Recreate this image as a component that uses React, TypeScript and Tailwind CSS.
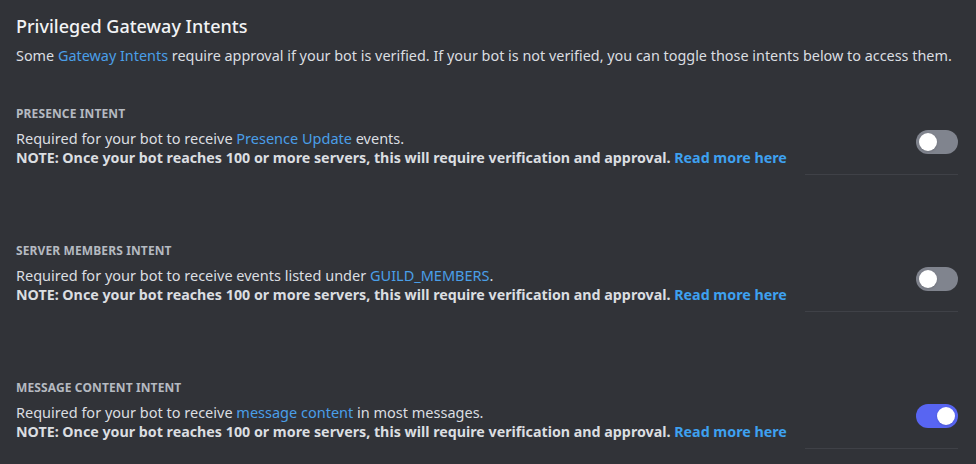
import { useState } from 'react';

const font = { fontFamily: '"Noto Sans", "Open Sans", sans-serif' };

const Toggle = ({ on, onClick }: { on: boolean; onClick: () => void }) => (
  <button
    onClick={onClick}
    className={
      on
        ? 'relative w-[42px] h-[24px] rounded-full bg-[#5865f2] shrink-0'
        : 'relative w-[42px] h-[24px] rounded-full bg-[#80848e] shrink-0'
    }
  >
    <span
      className={
        on
          ? 'absolute top-[3px] left-[21px] w-[18px] h-[18px] rounded-full bg-white shadow'
          : 'absolute top-[3px] left-[3px] w-[18px] h-[18px] rounded-full bg-white shadow'
      }
    />
  </button>
);

const Intent = ({
  title,
  before,
  link,
  after,
  on,
  onClick,
}: {
  title: string;
  before: string;
  link: string;
  after: string;
  on: boolean;
  onClick: () => void;
}) => (
  <section className="mt-[68px] first:mt-0">
    <h3 className="text-[12px] leading-[16px] font-bold uppercase text-[#b5bac1] tracking-[0.01em]">{title}</h3>
    <div className="flex items-start mt-[6px]">
      <div className="flex-1">
        <p className="text-[14.5px] leading-[20px] text-[#dbdee1]">
          {before}
          <a className="text-[#4a9fe8]">{link}</a>
          {after}
        </p>
        <p className="text-[14.25px] leading-[20px] font-bold text-[#dbdee1] whitespace-nowrap">
          NOTE: Once your bot reaches 100 or more servers, this will require verification and approval.{' '}
          <a className="text-[#3ea1f0]">Read more here</a>
        </p>
      </div>
      <div className="w-[153px] flex flex-col items-end mt-[2px]">
        <Toggle on={on} onClick={onClick} />
        <div className="w-full h-px bg-[#3f4147] mt-[20px]" />
      </div>
    </div>
  </section>
);

export default function App() {
  const [state, setState] = useState([false, false, true]);
  const flip = (i: number) => setState((s) => s.map((v, j) => (j === i ? !v : v)));

  return (
    <div className="w-[976px] h-[464px] bg-[#313338] pl-[16px] pr-[18px] pt-[14px] overflow-hidden" style={font}>
      <h2 className="text-[18px] leading-[24px] font-medium text-[#f2f3f5]">Privileged Gateway Intents</h2>
      <p className="mt-[8px] text-[14.4px] leading-[20px] text-[#dbdee1] whitespace-nowrap">
        Some <a className="text-[#4a9fe8]">Gateway Intents</a> require approval if your bot is verified. If your bot is not
        verified, you can toggle those intents below to access them.
      </p>
      <div className="mt-[40px]">
        <Intent
          title="Presence Intent"
          before="Required for your bot to receive "
          link="Presence Update"
          after=" events."
          on={state[0]}
          onClick={() => flip(0)}
        />
        <Intent
          title="Server Members Intent"
          before="Required for your bot to receive events listed under "
          link="GUILD_MEMBERS"
          after="."
          on={state[1]}
          onClick={() => flip(1)}
        />
        <Intent
          title="Message Content Intent"
          before="Required for your bot to receive "
          link="message content"
          after=" in most messages."
          on={state[2]}
          onClick={() => flip(2)}
        />
      </div>
    </div>
  );
}
